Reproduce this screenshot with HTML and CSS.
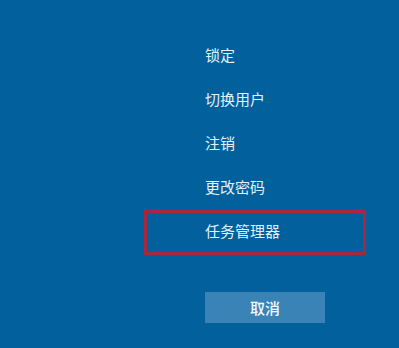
FILE: index.html
```html
<!DOCTYPE html>
<html lang="zh-CN">
<head>
<meta charset="utf-8">
<title>安全选项</title>
<link rel="stylesheet" href="styles.css">
</head>
<body>
<div class="screen">
  <ul class="menu">
    <li class="item">锁定</li>
    <li class="item">切换用户</li>
    <li class="item">注销</li>
    <li class="item">更改密码</li>
    <li class="item item-selected">任务管理器</li>
  </ul>
  <div class="actions">
    <button class="cancel">取消</button>
  </div>
</div>
</body>
</html>
```
FILE: styles.css
```css
html, body {
  margin: 0;
  padding: 0;
  height: 100%;
}
body {
  background: #02609d;
  font-family: "Microsoft YaHei", "Noto Sans CJK SC", "Noto Sans", sans-serif;
  color: #e2f0fa;
}
.screen {
  padding-top: 34px;
  padding-left: 144px;
}
.menu {
  list-style: none;
  margin: 0;
  padding: 0;
  width: 222px;
}
.item {
  box-sizing: border-box;
  height: 44px;
  display: flex;
  align-items: center;
  padding-left: 61px;
  font-size: 15px;
  line-height: 20px;
  padding-bottom: 2px;
}
.item-selected {
  border: 3px solid #a6283f;
  padding-left: 58px;
  height: 45px;
  padding-bottom: 3px;
}
.actions {
  padding-top: 37px;
  padding-left: 61px;
}
.cancel {
  width: 120px;
  height: 31px;
  border: none;
  background: #3a83b6;
  color: #f4f9fd;
  font-family: "Microsoft YaHei", "Noto Sans CJK SC", "Noto Sans", sans-serif;
  font-size: 15px;
  font-weight: 500;
  padding: 0;
  display: block;
}
```
